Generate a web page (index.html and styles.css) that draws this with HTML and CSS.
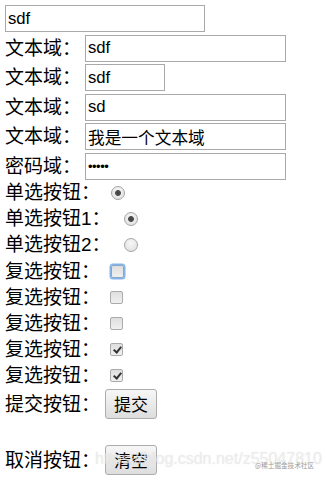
FILE: index.html
```html
<!DOCTYPE html>
<html lang="zh-CN">
<head>
<meta charset="utf-8">
<title>表单</title>
<link rel="stylesheet" href="styles.css">
</head>
<body>
<form class="form">
  <div class="fields">
    <div class="row"><input class="text wide" type="text" value="sdf"></div>
    <div class="row"><span class="label">文本域：</span><input class="text wide" type="text" value="sdf"></div>
    <div class="row"><span class="label">文本域：</span><input class="text narrow" type="text" value="sdf"></div>
    <div class="row"><span class="label">文本域：</span><input class="text wide" type="text" value="sd"></div>
    <div class="row"><span class="label">文本域：</span><input class="text wide" type="text" value="我是一个文本域"></div>
    <div class="row"><span class="label">密码域：</span><input class="text wide" type="password" value="12345"></div>
  </div>
  <div class="choices">
    <div class="crow"><span class="label">单选按钮：</span><input class="radio" type="radio" name="r0" checked></div>
    <div class="crow"><span class="label">单选按钮1：</span><input class="radio r1" type="radio" name="r1" checked></div>
    <div class="crow"><span class="label">单选按钮2：</span><input class="radio r1" type="radio" name="r1b"></div>
    <div class="crow"><span class="label">复选按钮：</span><input class="check focused" type="checkbox"></div>
    <div class="crow"><span class="label">复选按钮：</span><input class="check" type="checkbox"></div>
    <div class="crow"><span class="label">复选按钮：</span><input class="check" type="checkbox"></div>
    <div class="crow"><span class="label">复选按钮：</span><input class="check" type="checkbox" checked></div>
    <div class="crow"><span class="label">复选按钮：</span><input class="check" type="checkbox" checked></div>
  </div>
  <div class="brow"><span class="label">提交按钮：</span><button class="btn" type="button">提交</button></div>
  <div class="spacer"></div>
  <div class="brow"><span class="label">取消按钮：</span><button class="btn" type="button">清空</button></div>
</form>
<div class="watermark">https://blog.csdn.net/z55047810</div>
<div class="wm-small">@稀土掘金技术社区</div>
</body>
</html>
```

FILE: styles.css
```css
html, body {
  margin: 0;
  padding: 0;
  background: #fff;
}
body {
  position: relative;
  width: 326px;
  height: 482px;
  overflow: hidden;
  font-family: "Liberation Sans", "Noto Sans CJK SC", sans-serif;
  color: #000;
}
.form {
  padding: 5px 0 0 5px;
  display: flex;
  flex-direction: column;
}
.fields {
  display: flex;
  flex-direction: column;
  gap: 2.5px;
}
.row {
  height: 27px;
  display: flex;
  align-items: center;
}
.label {
  font-size: 19px;
  line-height: 19px;
  white-space: nowrap;
}
.row .label {
  width: 80px;
}
.text {
  box-sizing: border-box;
  height: 27px;
  margin: 0;
  border: 1px solid #a9a9a9;
  border-radius: 0;
  padding: 0 2px;
  font-family: "Liberation Sans", "Noto Sans CJK SC", sans-serif;
  font-size: 16.7px;
  color: #000;
  background: #fff;
  outline: none;
}
.text.wide { width: 201px; }
.row:first-child .text.wide { width: 200px; }
.text.narrow { width: 80px; }
.text[type="password"] { letter-spacing: -0.5px; font-size: 13px; }

.choices {
  display: flex;
  flex-direction: column;
}
.crow {
  height: 26.2px;
  display: flex;
  align-items: center;
}
.radio, .check {
  appearance: none;
  -webkit-appearance: none;
  margin: 0;
  box-sizing: border-box;
  flex: none;
}
.radio {
  width: 14px;
  height: 14px;
  margin-left: 11px;
  border-radius: 50%;
  border: 1px solid #a5a5a5;
  background: radial-gradient(circle at 50% 35%, #f7f7f7 0%, #e2e2e2 80%);
}
.radio.r1 { margin-left: 13px; }
.radio:checked {
  background:
    radial-gradient(circle, #3c3c3c 0, #555 2.6px, transparent 3.3px),
    radial-gradient(circle at 50% 35%, #f7f7f7 0%, #e2e2e2 80%);
}
.check {
  position: relative;
  width: 13px;
  height: 13px;
  margin-left: 10px;
  border: 1px solid #ababab;
  border-radius: 2px;
  background: linear-gradient(#dedede, #f0f0f0);
}
.check.focused {
  box-shadow: 0 0 0 1.5px #86b3e8;
  border-color: #8ba5c6;
  margin-left: 11px;
}
.check:checked::after {
  content: "";
  position: absolute;
  left: 3.5px;
  top: 1px;
  width: 3px;
  height: 6px;
  border: solid #333;
  border-width: 0 2.2px 2.2px 0;
  transform: rotate(40deg);
}
.brow {
  height: 30px;
  display: flex;
  align-items: center;
}
.brow .label { width: 95px; margin-right: 5px; }
.btn {
  box-sizing: border-box;
  width: 52px;
  height: 30px;
  margin: 0;
  padding: 0;
  border: 1px solid #acacac;
  border-radius: 3px;
  background: linear-gradient(#f7f7f7, #dddddd);
  font-family: "Noto Sans CJK SC", sans-serif;
  font-size: 17px;
  line-height: 28px;
  color: #000;
}
.spacer { height: 26px; }

.watermark {
  position: absolute;
  left: 95px;
  top: 450px;
  font-family: "Liberation Sans", sans-serif;
  font-size: 16px;
  color: rgba(240, 240, 240, 0.6);
  text-shadow: 0 0 1px rgba(200, 200, 200, 0.5);
  white-space: nowrap;
  pointer-events: none;
}
.wm-small {
  position: absolute;
  left: 255px;
  top: 461px;
  font-family: "Noto Sans CJK SC", sans-serif;
  font-size: 6.6px;
  line-height: 9px;
  color: #9a9a9a;
  white-space: nowrap;
}
```
